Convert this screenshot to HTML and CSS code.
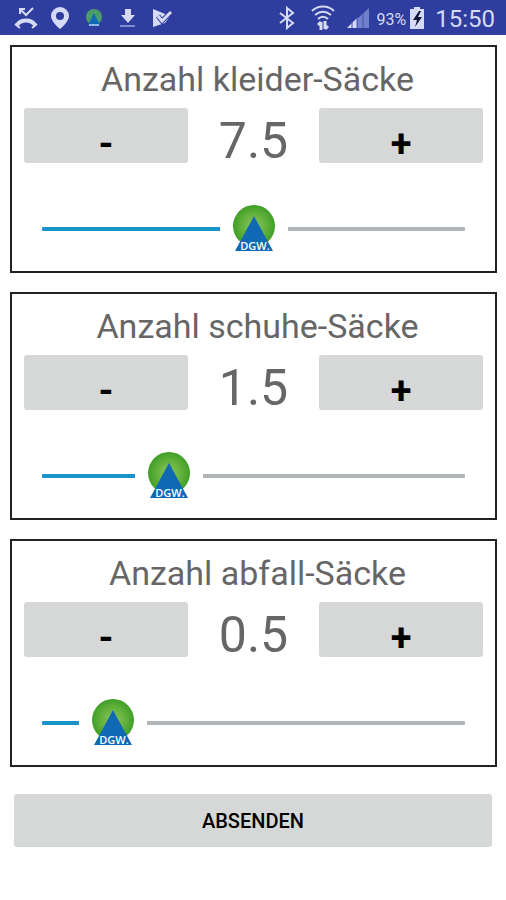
FILE: index.html
```html
<!DOCTYPE html>
<html lang="de">
<head>
    <meta charset="UTF-8">
    <meta name="viewport" content="width=device-width, initial-scale=1.0">
    <title>Anzahl Säcke</title>
    <link rel="stylesheet" href="styles.css">
</head>
<body>
    <!-- Shared logo -->
    <svg class="defs" width="0" height="0" aria-hidden="true">
        <defs>
            <radialGradient id="green">
                <stop offset="0" stop-color="#8cc760"/>
                <stop offset="0.6" stop-color="#62b03c"/>
                <stop offset="1" stop-color="#3f9f26"/>
            </radialGradient>
            <symbol id="logo" viewBox="0 0 44 48">
                <circle cx="22" cy="21" r="21" fill="url(#green)"/>
                <path d="M22 11L41 46H3z" fill="#1168b3"/>
                <text class="logo-text" x="23" y="45" text-anchor="middle">DGW.</text>
            </symbol>
        </defs>
    </svg>

    <header class="status-bar">
        <div class="status-left">
            <svg width="24" height="24" viewBox="0 0 24 24" fill="none" stroke="#d5dbf5">
                <path d="M6 3l6 6 7-7M6 8V3h5" stroke-width="2"/>
                <path d="M3 19c4-6 14-6 18 0" stroke-width="4"/>
                <path d="M1 18l5 4M23 18l-5 4" stroke-width="2"/>
            </svg>
            <svg width="24" height="24" viewBox="0 0 24 24" fill="#d5dbf5">
                <path fill-rule="evenodd" d="M12 1a9 9 0 0 0-9 9c0 6 9 13 9 13s9-7 9-13a9 9 0 0 0-9-9zm0 5a4 4 0 1 1 0 8 4 4 0 0 1 0-8z"/>
            </svg>
            <svg width="24" height="24" viewBox="0 0 24 24">
                <circle cx="12" cy="11" r="8" fill="#4a9d68"/>
                <path d="M12 7l6 12H6z" fill="#1168b3"/>
                <path d="M7 19h10" stroke="#8fb6e0" stroke-width="2"/>
            </svg>
            <svg width="24" height="24" viewBox="0 0 24 24">
                <path d="M9 3h6v6h4l-7 8-7-8h4z" fill="#d5dbf5"/>
                <path d="M4 20h15" stroke="#7f8cd0" stroke-width="2"/>
            </svg>
            <svg width="24" height="24" viewBox="0 0 24 24">
                <path d="M3 3l17 7-5 7L3 21z" fill="#d5dbf5"/>
                <path d="M8 10l4 5 9-9" fill="none" stroke="#2f3d9e" stroke-width="5"/>
                <path d="M8 10l4 5 9-9" fill="none" stroke="#d5dbf5" stroke-width="3"/>
            </svg>
        </div>
        <div class="status-right">
            <svg width="16" height="24" viewBox="0 0 16 24" fill="none" stroke="#d5dbf5" stroke-width="2">
                <path d="M1 7l13 10-6 5V2l6 5L1 17"/>
            </svg>
            <svg class="wifi" width="24" height="26" viewBox="0 0 24 26" fill="none" stroke="#d5dbf5" stroke-width="2">
                <path d="M1 6c6-6 16-6 22 0M4 10c5-4 11-4 16 0M7 14c3-3 7-3 10 0"/>
                <path d="M10 25v-8M7 20l3-3M14 16v8M17 21l-3 3" stroke-width="3"/>
            </svg>
            <svg width="24" height="24" viewBox="0 0 24 24">
                <path d="M23 2v20H1z" fill="#7180cb"/>
                <path d="M11 12v10H1z" fill="#d5dbf5"/>
                <path d="M6 15v7M11 11v11M17 7v15" stroke="#4252ae"/>
            </svg>
            <span class="percent">93%</span>
            <svg width="14" height="24" viewBox="0 0 14 24">
                <path d="M4 1h6v2h4v20H0V3h4z" fill="#d5dbf5"/>
                <path d="M9 5l-6 9h4l-2 7 7-10H8l3-6z" fill="#101638"/>
            </svg>
            <span class="clock">15:50</span>
        </div>
    </header>

    <form class="counters">
        <section class="card">
            <label class="title" for="kleider">Anzahl kleider-Säcke</label>
            <div class="controls">
                <button class="btn step" type="button" data-step="-0.5" aria-label="Weniger">-</button>
                <output class="value" for="kleider">7.5</output>
                <button class="btn step" type="button" data-step="0.5" aria-label="Mehr">+</button>
            </div>
            <div class="slider" style="--pos: 50%">
                <input type="range" id="kleider" min="0" max="15" step="0.5" value="7.5">
                <svg class="thumb"><use href="#logo"/></svg>
            </div>
        </section>

        <section class="card">
            <label class="title" for="schuhe">Anzahl schuhe-Säcke</label>
            <div class="controls">
                <button class="btn step" type="button" data-step="-0.5" aria-label="Weniger">-</button>
                <output class="value" for="schuhe">1.5</output>
                <button class="btn step" type="button" data-step="0.5" aria-label="Mehr">+</button>
            </div>
            <div class="slider" style="--pos: 30%">
                <input type="range" id="schuhe" min="0" max="5" step="0.5" value="1.5">
                <svg class="thumb"><use href="#logo"/></svg>
            </div>
        </section>

        <section class="card">
            <label class="title" for="abfall">Anzahl abfall-Säcke</label>
            <div class="controls">
                <button class="btn step" type="button" data-step="-0.5" aria-label="Weniger">-</button>
                <output class="value" for="abfall">0.5</output>
                <button class="btn step" type="button" data-step="0.5" aria-label="Mehr">+</button>
            </div>
            <div class="slider" style="--pos: 16.67%">
                <input type="range" id="abfall" min="0" max="3" step="0.5" value="0.5">
                <svg class="thumb"><use href="#logo"/></svg>
            </div>
        </section>

        <button class="btn submit" type="submit">ABSENDEN</button>
    </form>

    <script src="script.js"></script>
</body>
</html>
```

FILE: styles.css
```css
:root {
    --bar-color: #2f3d9e;
    --bar-text: #d5dbf5;
    --text-color: #666666;
    --button-color: #d6d8d7;
    --track-color: #b2b5b7;
    --accent-color: #1a94c8;
}

* {
    margin: 0;
    padding: 0;
    box-sizing: border-box;
}

body {
    min-height: 100vh;
    background: #fefefe;
    color: var(--text-color);
    font-family: Roboto, sans-serif;
}

.defs {
    position: absolute;
}

/* Status bar */
.status-bar {
    display: flex;
    justify-content: space-between;
    align-items: center;
    height: 35px;
    padding: 0 11px 0 14px;
    background: var(--bar-color);
    color: var(--bar-text);
}

.status-left {
    display: flex;
    gap: 10px;
}

.status-right {
    display: flex;
    align-items: center;
}

.wifi {
    margin: 0 11px 0 16px;
}

.percent {
    margin: 0 4px 0 7px;
    padding-top: 3px;
    font-size: 16px;
}

.clock {
    margin-left: 11px;
    padding-top: 4px;
    font-size: 24px;
    line-height: 31px;
}

/* Counter cards */
.counters {
    display: flex;
    flex-direction: column;
    gap: 19px;
    padding: 10px 9px 10px 10px;
}

.card {
    padding: 12px 12px 18px;
    border: 2px solid #222222;
    background: #ffffff;
}

.title {
    display: block;
    font-size: 34px;
    line-height: 40px;
    text-align: center;
    padding-left: 8px;
}

.controls {
    display: grid;
    grid-template-columns: 5fr 4fr 5fr;
    align-items: center;
    margin-top: 9px;
}

.btn {
    border: none;
    border-radius: 3px;
    background: var(--button-color);
    color: #000000;
    font-family: inherit;
    cursor: pointer;
}

.step {
    height: 55px;
    padding-top: 18px;
    font-size: 38px;
    font-weight: 700;
    line-height: 37px;
}

.value {
    padding-top: 12px;
    font-size: 50px;
    line-height: 43px;
    text-align: center;
}

/* Slider */
.slider {
    position: relative;
    margin: 42px 18px 0;
}

.slider input {
    display: block;
    width: 100%;
    height: 48px;
    appearance: none;
    background: transparent;
    cursor: pointer;
}

.slider input::-webkit-slider-runnable-track {
    height: 4px;
    border-radius: 1px;
    background: linear-gradient(to right, var(--accent-color) var(--pos), var(--track-color) var(--pos));
}

.slider input::-webkit-slider-thumb {
    appearance: none;
    width: 1px;
    height: 4px;
    background: transparent;
}

.thumb {
    position: absolute;
    top: 0;
    left: var(--pos);
    width: 68px;
    height: 48px;
    padding: 0 12px;
    background: #ffffff;
    transform: translateX(-50%);
    pointer-events: none;
}

.logo-text {
    fill: #ffffff;
    font-family: "Open Sans", sans-serif;
    font-size: 11px;
    font-weight: 600;
}

.submit {
    height: 53px;
    margin: 8px 5px 0 4px;
    font-size: 20px;
    font-weight: 500;
}
```

FILE: script.js
```js
document.querySelectorAll('.card').forEach(card => {
    const input = card.querySelector('input');
    const slider = card.querySelector('.slider');
    const value = card.querySelector('.value');

    function update() {
        value.textContent = Number(input.value).toFixed(1);
        slider.style.setProperty('--pos', input.value / input.max * 100 + '%');
    }

    input.addEventListener('input', update);

    card.querySelectorAll('.step').forEach(button => {
        button.addEventListener('click', () => {
            input.value = Number(input.value) + Number(button.dataset.step);
            update();
        });
    });
});
```
